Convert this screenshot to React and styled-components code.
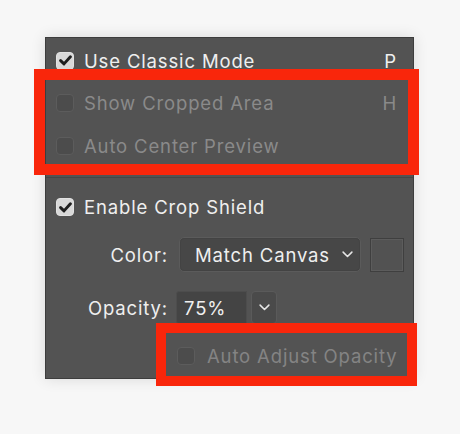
import React from "react";
import styled, { createGlobalStyle } from "styled-components";

const Global = createGlobalStyle`
  html, body { margin: 0; padding: 0; background: #f7f7f7; }
  body { font-family: Inter, "Noto Sans", sans-serif; -webkit-font-smoothing: antialiased; }
`;

const Page = styled.div`
  position: relative;
  width: 460px;
  height: 434px;
  padding: 37px 0 0 45px;
  box-sizing: border-box;
`;

const Panel = styled.div`
  width: 369px;
  height: 342px;
  box-sizing: border-box;
  background: #535353;
  border: 1px solid #3d3d3d;
  box-shadow: 0 0 14px rgba(0, 0, 0, 0.12);
  display: flex;
  flex-direction: column;
  color: #efefef;
  font-size: 18.5px;
  letter-spacing: 0.85px;
`;

const Section = styled.div`
  display: flex;
  flex-direction: column;
  padding: ${(p) => p.$pad};
  border-top: ${(p) => (p.$divided ? "1px solid #464646" : "none")};
`;

const Row = styled.div`
  display: flex;
  align-items: center;
  height: ${(p) => p.$h || "42.5px"};
  padding: 0 16px 0 10px;
  color: ${(p) => (p.$disabled ? "#8a8a8a" : "#efefef")};
`;

const Box = styled.span`
  width: 18px;
  height: 18px;
  box-sizing: border-box;
  border-radius: 4px;
  flex: none;
  display: flex;
  align-items: center;
  justify-content: center;
  margin-right: ${(p) => p.$gap || "10px"};
  background: ${(p) => (p.$checked ? "#d9d9d9" : "#4c4c4c")};
  border: 1px solid ${(p) => (p.$checked ? "#e2e2e2" : "#5c5c5c")};
`;

const Label = styled.span`
  flex: 1;
  white-space: nowrap;
`;

const Shortcut = styled.span`
  flex: none;
`;

const FieldRow = styled.div`
  display: flex;
  align-items: center;
  height: ${(p) => p.$h};
  margin-top: ${(p) => p.$mt};
`;

const FieldLabel = styled.span`
  width: 122px;
  text-align: right;
  flex: none;
  margin-right: ${(p) => p.$gap};
`;

const Select = styled.div`
  width: 182px;
  height: 35px;
  box-sizing: border-box;
  border-radius: 5px;
  background: #474747;
  border: 1px solid #5b5b5b;
  box-shadow: inset 0 0 0 1px #434343;
  display: flex;
  align-items: center;
  padding: 0 7px 0 15px;
  gap: 11px;
`;

const SelectText = styled.span`
  flex: 1;
  white-space: nowrap;
`;

const Swatch = styled.div`
  width: 34px;
  height: 34px;
  box-sizing: border-box;
  margin-left: 9px;
  border: 1px solid #3f3f3f;
  box-shadow: inset 0 0 0 1px #5c5c5c;
  background: #525252;
`;

const NumInput = styled.div`
  width: 71px;
  height: 33px;
  box-sizing: border-box;
  background: #444444;
  border: 1px solid #4d4d4d;
  border-radius: 3px 0 0 3px;
  display: flex;
  align-items: center;
  padding-left: 7px;
`;

const StepButton = styled.div`
  width: 26px;
  height: 33px;
  margin-left: 4px;
  box-sizing: border-box;
  background: #4a4a4a;
  border: 1px solid #5a5a5a;
  border-radius: 4px;
  display: flex;
  align-items: center;
  justify-content: center;
`;

const SubRow = styled.div`
  display: flex;
  align-items: center;
  height: 30px;
  margin-top: 17px;
  padding-left: 131px;
  color: #848484;
`;

const Callout = styled.div`
  position: absolute;
  left: ${(p) => p.$x}px;
  top: ${(p) => p.$y}px;
  width: ${(p) => p.$w}px;
  height: ${(p) => p.$h}px;
  box-sizing: border-box;
  border: ${(p) => p.$b}px solid #f9260b;
  pointer-events: none;
`;

const Check = () => (
  <svg width="13" height="11" viewBox="0 0 13 11">
    <path d="M1.6 5.6 L5 8.9 L11.4 1.8" fill="none" stroke="#1f1f1f" strokeWidth="2.9" strokeLinecap="round" strokeLinejoin="round" />
  </svg>
);

const Chevron = ({ size = 11 }) => (
  <svg width={size} height={size * 0.6} viewBox="0 0 10 6">
    <path d="M1 1 L5 5 L9 1" fill="none" stroke="#e6e6e6" strokeWidth="1.4" strokeLinecap="round" strokeLinejoin="round" />
  </svg>
);

export default function App() {
  return (
    <>
      <Global />
      <Page>
        <Panel>
          <Section $pad="1.5px 0 10px">
            <Row>
              <Box $checked><Check /></Box>
              <Label>Use Classic Mode</Label>
              <Shortcut>P</Shortcut>
            </Row>
            <Row $disabled>
              <Box $disabled />
              <Label>Show Cropped Area</Label>
              <Shortcut>H</Shortcut>
            </Row>
            <Row $disabled>
              <Box $disabled />
              <Label>Auto Center Preview</Label>
            </Row>
          </Section>
          <Section $divided $pad="8px 0 0">
            <Row $h="42px">
              <Box $checked><Check /></Box>
              <Label>Enable Crop Shield</Label>
            </Row>
            <FieldRow $h="35px" $mt="9px">
              <FieldLabel $gap="11px">Color:</FieldLabel>
              <Select>
                <SelectText>Match Canvas</SelectText>
                <Chevron />
              </Select>
              <Swatch />
            </FieldRow>
            <FieldRow $h="33px" $mt="19px">
              <FieldLabel $gap="8px">Opacity:</FieldLabel>
              <NumInput>75%</NumInput>
              <StepButton><Chevron /></StepButton>
            </FieldRow>
            <SubRow>
              <Box $disabled $gap="12px" />
              <Label>Auto Adjust Opacity</Label>
            </SubRow>
          </Section>
        </Panel>
        <Callout $x={34} $y={69} $w={385} $h={106} $b={11} />
        <Callout $x={156} $y={323} $w={261} $h={63} $b={10} />
      </Page>
    </>
  );
}
